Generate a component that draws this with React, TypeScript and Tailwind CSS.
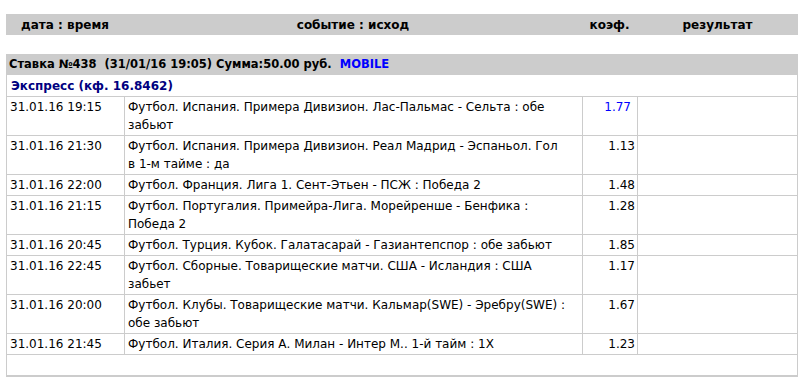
import React from 'react';

type Bet = { date: string; event: string[]; coef: string; link?: boolean };

// строки события разбиты так же, как на исходной странице
const bets: Bet[] = [
  { date: '31.01.16 19:15', event: ['Футбол. Испания. Примера Дивизион. Лас-Пальмас - Сельта : обе', 'забьют'], coef: '1.77', link: true },
  { date: '31.01.16 21:30', event: ['Футбол. Испания. Примера Дивизион. Реал Мадрид - Эспаньол. Гол', 'в 1-м тайме : да'], coef: '1.13' },
  { date: '31.01.16 22:00', event: ['Футбол. Франция. Лига 1. Сент-Этьен - ПСЖ : Победа 2'], coef: '1.48' },
  { date: '31.01.16 21:15', event: ['Футбол. Португалия. Примейра-Лига. Морейренше - Бенфика :', 'Победа 2'], coef: '1.28' },
  { date: '31.01.16 20:45', event: ['Футбол. Турция. Кубок. Галатасарай - Газиантепспор : обе забьют'], coef: '1.85' },
  { date: '31.01.16 22:45', event: ['Футбол. Сборные. Товарищеские матчи. США - Исландия : США', 'забьет'], coef: '1.17' },
  { date: '31.01.16 20:00', event: ['Футбол. Клубы. Товарищеские матчи. Кальмар(SWE) - Эребру(SWE) :', 'обе забьют'], coef: '1.67' },
  { date: '31.01.16 21:45', event: ['Футбол. Италия. Серия А. Милан - Интер М.. 1-й тайм : 1X'], coef: '1.23' },
];

const cols = 'grid grid-cols-[118px_458px_55px_1fr]';
const cell = 'border-l border-t border-[#cccccc] py-px leading-[18px]';

export default function App() {
  return (
    <div className="w-[804px] h-[386px] bg-white pt-[14px] px-[6px] text-[12px] text-black" style={{ fontFamily: '"DejaVu Sans", Verdana, sans-serif' }}>
      {/* шапка колонок */}
      <div className={`${cols} bg-[#cccccc] h-[21px] items-center font-bold`}>
        <div className="text-center">дата : время</div>
        <div className="text-center">событие : исход</div>
        <div className="text-center">коэф.</div>
        <div className="text-center">результат</div>
      </div>

      <div className="mt-[19px] border-r border-b-2 border-[#cccccc]">
        <div className="bg-[#cccccc] h-[21px] flex items-center pl-[3px] font-bold whitespace-pre text-[11.5px]">
          Ставка №438  (31/01/16 19:05) Сумма:50.00 руб.  <span className="text-[#0000ff]">MOBILE</span>
        </div>
        <div className="border-l border-[#cccccc] h-[21px] flex items-center pl-[4px] font-bold text-[#000080]">
          Экспресс (кф. 16.8462)
        </div>
        {bets.map((b, i) => (
          <div key={i} className={cols}>
            <div className={`${cell} pl-[3px]`}>{b.date}</div>
            <div className={`${cell} pl-[3px] pr-px whitespace-nowrap overflow-hidden`}>
              {b.event.map((line, j) => (
                <div key={j}>{line}</div>
              ))}
            </div>
            <div className={`${cell} text-right pr-[2px] ${b.link ? 'text-[#0000ff] pr-[6px]' : ''}`}>{b.coef}</div>
            <div className={cell}></div>
          </div>
        ))}
        <div className={`${cell} h-[21px]`}></div>
      </div>
    </div>
  );
}
